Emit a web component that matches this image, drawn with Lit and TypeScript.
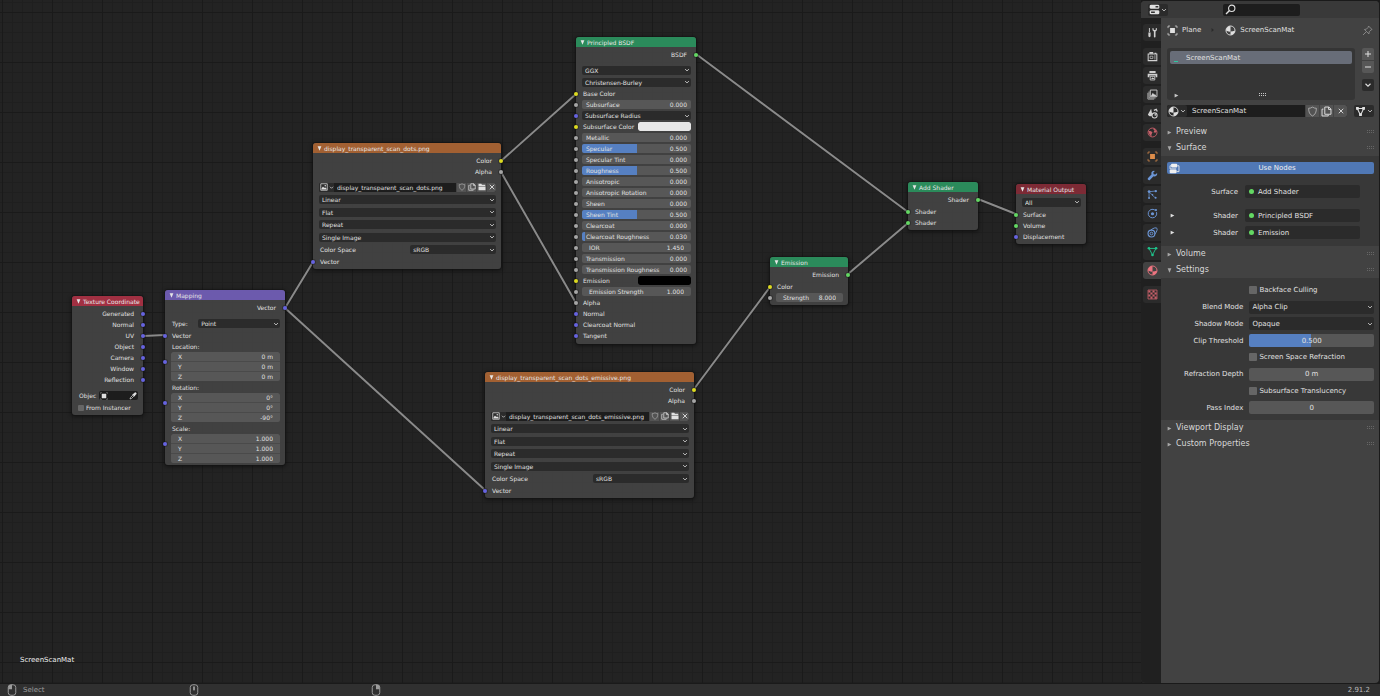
import { LitElement, html, svg, css, nothing, TemplateResult } from "lit";
import { customElement, property } from "lit/decorators.js";
import { classMap } from "lit/directives/class-map.js";
import { styleMap } from "lit/directives/style-map.js";

/* ---------- icons, all on a 16 x 16 grid ---------- */

const icons: Record<string, TemplateResult> = {
  chevron: svg`<path d="M3 5.5 8 10.5 13 5.5" fill="none" stroke="currentColor" stroke-width="2.2"/>`,
  right: svg`<path d="M2 2v12l12-6z" fill="currentColor"/>`,
  down: svg`<path d="M2 1h12L8 15z" fill="currentColor"/>`,
  crumb: svg`<path d="M5 4l5 4-5 4z" fill="currentColor"/>`,
  plus: svg`<path d="M8 2v12M2 8h12" stroke="currentColor" stroke-width="2"/>`,
  minus: svg`<path d="M2 8h12" stroke="currentColor" stroke-width="2"/>`,
  close: svg`<path d="M3.5 3.5l9 9M12.5 3.5l-9 9" stroke="currentColor" stroke-width="1.8"/>`,
  grip: svg`<path d="M0 4h2v2H0zM4 4h2v2H4zM8 4h2v2H8zM12 4h2v2h-2zM0 8h2v2H0zM4 8h2v2H4zM8 8h2v2H8zM12 8h2v2h-2z" fill="currentColor" shape-rendering="crispEdges"/>`,
  shield: svg`<path d="M8 1.6c1.800 1.200 3.600 1.700 5.600 1.700 0 5.400-1.300 9-5.600 11.200C3.700 12.300 2.400 8.700 2.400 3.300c2 0 3.800-.5 5.600-1.700z" fill="none" stroke="currentColor" stroke-width="1.200" opacity=".7"/>`,
  copy: svg`<path d="M5.500 1.500h6l3 3V12h-9zM11 1.500V5h3.500" fill="none" stroke="currentColor" stroke-width="1.400"/><path d="M3.500 4.500h-2v10h9v-1.500" fill="none" stroke="currentColor" stroke-width="1.400"/>`,
  folder: svg`<path d="M1 1.500h5.500L8 3.500h6.500V6H1zM1 7h14v7.500H1z" fill="currentColor"/>`,
  image: svg`<path d="M1.500 1.500h13v13h-13z" fill="none" stroke="currentColor" stroke-width="1.500"/><path d="M3 13V11l3-4 2.500 3 1.500-1.500L13 11v2z" fill="currentColor"/><circle cx="10.500" cy="5.500" r="1.500" fill="currentColor"/>`,
  object: svg`<path d="M4.500 4.500h7v7h-7z" fill="currentColor"/><path d="M1.500 4.500v-3h3M11.500 1.500h3v3M14.500 11.500v3h-3M4.500 14.500h-3v-3" fill="none" stroke="currentColor" stroke-width="1.300" opacity=".8"/>`,
  well: svg`<path d="M3.500 3.500h9v9h-9z" fill="currentColor"/><path d="M1 4V1h3M12 1h3v3M15 12v3h-3M4 15H1v-3" fill="none" stroke="currentColor" stroke-width="1" opacity=".5"/>`,
  dropper: svg`<path d="M2 14l1-3 5.500-5.500 2 2L5 13z" fill="none" stroke="currentColor" stroke-width="1.400"/><path d="M7.500 4l1.500-.5 2-2a2 2 0 0 1 3.500 3l-2 2-.5 1.500-1 1L6.800 5z" fill="currentColor"/>`,
  editor: svg`<rect x="1" y="1" width="14" height="6" rx="2" fill="currentColor"/><rect x="1" y="9" width="14" height="6" rx="2" fill="currentColor"/><path d="M9.500 2.800h4v2.400h-4zM3 10.800h5.500v2.400H3z" fill="#333"/>`,
  search: svg`<circle cx="9.800" cy="6.200" r="4.600" fill="none" stroke="currentColor" stroke-width="1.600"/><path d="M6.500 9.500 1.500 14.500" stroke="currentColor" stroke-width="2"/>`,
  pin: svg`<path d="M9.500 1.500l5 5-1.500.8-2.500 2.500-.5 3.200L3.500 6.500l3-.5L9 3.300zM6.300 9.700 1.500 14.500" fill="none" stroke="currentColor" stroke-width="1.300"/>`,
  material: svg`<circle cx="8" cy="8" r="6.600" fill="none" stroke="currentColor" stroke-width="1.300"/><path d="M8 1.400A6.600 6.600 0 0 0 1.400 8c2.100 1.400 4.300 1.900 6.600 1.600zM8 9.600c2.400-.2 4.600-.8 6.600-1.600A6.600 6.600 0 0 1 8 14.600z" fill="currentColor"/>`,
  filter: svg`<path d="M3.500 4 7.500 12.500M12.500 4 8.500 12.500M4 3.500h8" stroke="currentColor" stroke-width="1.500"/><path d="M1.500 1.500h4v4h-4zM10.500 1.500h4v4h-4zM6 10.500h4v4H6z" fill="currentColor"/>`,
  tool: svg`<path d="M3.500 1.500v6" stroke="currentColor" stroke-width="1.400"/><path d="M2 8h3.200v5.200a1.600 1.600 0 0 1-3.200 0z" fill="currentColor"/><path d="M8 1.500v3.200l2 2V14a1 1 0 0 0 2.400 0V6.700l2-2V1.500l-1.800.6v2.400h-2.800V2.100z" fill="currentColor"/>`,
  render: svg`<path d="M1.700 4.500h12.600v9.500H1.700z" fill="none" stroke="currentColor" stroke-width="1.500"/><path d="M3.500 1.500h5.500v2.500H3.500zM11 2.500h2.500v2H11z" fill="currentColor"/><path d="M11.500 6v6.500" stroke="currentColor" stroke-width="1"/><path d="M4.500 7.500h4v3.500h-4z" fill="none" stroke="currentColor" stroke-width="1"/>`,
  output: svg`<path d="M3.500 1.500h9v3h-9zM1 5.500h14v5h-2.500V8h-9v2.500H1z" fill="currentColor"/><path d="M4.700 9.200h6.600v5.300H4.700z" fill="none" stroke="currentColor" stroke-width="1.300"/><path d="M6 13l1.700-2.500L9 12l.7-.8.900 1.800z" fill="currentColor"/>`,
  layers: svg`<path d="M4.800 1.500h9.700v9.700H4.800z" fill="none" stroke="currentColor" stroke-width="1.300"/><path d="M3 3.500v9.500h9.500M1.300 5.500v9.200h9.200" fill="none" stroke="currentColor" stroke-width="1.100"/><path d="M5.500 10.500l3-5 2 2.800 1-1 2.200 3.200z" fill="currentColor"/>`,
  scene: svg`<path d="M6 1 1.300 9.500c1.200 3 5 3.500 6.500 1L6 1z" fill="currentColor"/><circle cx="11" cy="10.800" r="3.700" fill="#2b2b2b" stroke="currentColor" stroke-width="1.500"/><circle cx="12" cy="10" r="1.200" fill="currentColor"/><path d="M10 3.500l3.500-1.500 1.500 3" stroke="currentColor" stroke-width="1.800" fill="none"/>`,
  world: svg`<circle cx="8" cy="8" r="6.500" fill="none" stroke="currentColor" stroke-width="1.300"/><path d="M2 5.500l4 .5 2 2-1.500 2.500V14L3.500 11zM8 2l3.500.8 2.700 4L12 8.500l-2.500-1L11 5z" fill="currentColor"/>`,
  wrench: svg`<path d="M14.700 4.300l-2.500 2.200-2.500-.5-.6-2.300 2.400-2.400a4 4 0 0 0-5 5.200L1.500 11.500a1.900 1.900 0 0 0 3 2.700l5-5a4 4 0 0 0 5.200-4.900z" fill="currentColor"/>`,
  particles: svg`<path d="M3 4l9-1M3 4v8.500M3.500 4.500l8 8" stroke="currentColor" stroke-width="1.100"/><circle cx="3" cy="3.800" r="2" fill="currentColor"/><circle cx="12.800" cy="3" r="1.700" fill="currentColor"/><circle cx="3" cy="13" r="1.500" fill="currentColor"/><circle cx="12.500" cy="12.800" r="1.500" fill="currentColor"/><circle cx="8" cy="8.500" r="1.200" fill="currentColor"/>`,
  physics: svg`<path d="M11.500 3a6.200 6.200 0 1 0 2.300 3" fill="none" stroke="currentColor" stroke-width="1.400"/><circle cx="8" cy="8.300" r="2.300" fill="currentColor"/><circle cx="13" cy="3" r="1.600" fill="currentColor"/>`,
  constraint: svg`<circle cx="6.500" cy="9.500" r="5" fill="none" stroke="currentColor" stroke-width="1.600"/><circle cx="6.500" cy="9.500" r="2" fill="none" stroke="currentColor" stroke-width="1.400"/><path d="M5.500 4.500c4-3.500 8-4 9-2.500s-.5 5-3.500 9" fill="none" stroke="currentColor" stroke-width="1.400"/>`,
  mesh: svg`<path d="M3 3.500h10L8 13z" fill="none" stroke="currentColor" stroke-width="1.400"/><circle cx="2.800" cy="3.300" r="1.900" fill="currentColor"/><circle cx="13.200" cy="3.300" r="1.900" fill="currentColor"/><circle cx="8" cy="13" r="1.900" fill="currentColor"/>`,
  texture: svg`<path d="M1.500 1.500h13v13h-13z" fill="none" stroke="currentColor" stroke-width="1.200"/><path d="M2 2h3v3H2zM8 2h3v3H8zM5 5h3v3H5zM11 5h3v3h-3zM2 8h3v3H2zM8 8h3v3H8zM5 11h3v3H5zM11 11h3v3h-3z" fill="currentColor"/>`,
  nodes: svg`<rect x="3" y="1" width="9" height="5.500" rx="1.500" fill="currentColor"/><rect x="1" y="9.500" width="10" height="5.500" rx="1.500" fill="currentColor"/><path d="M12 4h2.500v8.500H11M3 4H1.500v4.500h9" fill="none" stroke="currentColor" stroke-width="1.200"/>`,
  mouseLeft: svg`<rect x="3" y="1" width="10" height="14" rx="3.500" fill="none" stroke="currentColor" stroke-width="1.300"/><path d="M3 7V4.500A3.500 3.500 0 0 1 6.500 1H8v6z" fill="currentColor"/>`,
  mouseMiddle: svg`<rect x="3" y="1" width="10" height="14" rx="3.500" fill="none" stroke="currentColor" stroke-width="1.300"/><rect x="6.800" y="3" width="2.400" height="5.500" rx="1" fill="currentColor"/>`,
  mouseRight: svg`<rect x="3" y="1" width="10" height="14" rx="3.500" fill="none" stroke="currentColor" stroke-width="1.300"/><path d="M13 7V4.500A3.500 3.500 0 0 0 9.500 1H8v6z" fill="currentColor"/>`,
};

const icon = (name: string, size = "") =>
  html`<svg class="icon ${size}" viewBox="0 0 16 16" aria-hidden="true">${icons[name]}</svg>`;

/* ---------- shared controls ---------- */

const controls = css`
  * { box-sizing: border-box; }
  button, input, select {
    font: inherit; color: inherit; margin: 0; padding: 0; border: 0;
    background: none; border-radius: 0; outline: none; appearance: none; min-width: 0;
  }
  .icon { display: block; flex: none; width: 11px; height: 11px; }
  .icon.xs { width: 5px; height: 5px; }
  .icon.sm { width: 6px; height: 6px; }
  .icon.md { width: 8px; height: 8px; }
  .icon.lg { width: 12px; height: 12px; }
  .stack { display: grid; align-items: center; min-width: 0; }
  .stack > * { grid-area: 1 / 1; }
  .stack > .icon { justify-self: end; pointer-events: none; margin-right: 1px; }
  .stack > .caption {
    display: flex; justify-content: space-between; pointer-events: none; padding: 0 4px;
  }
  .drop { width: 100%; height: var(--control); background: #2b2b2b; border-radius: 2px; padding: 0 3px; }
  .range {
    width: 100%; height: var(--control); border-radius: 2px;
    background: linear-gradient(to right, #5680c2 var(--fill), #575757 var(--fill));
  }
  .range::-webkit-slider-thumb { appearance: none; width: 0; height: 0; }
  .tick { width: var(--tick); height: var(--tick); background: #666; border-radius: 1px; flex: none; }
  .tick:checked { background: #5680c2; }
  .check { display: flex; align-items: center; gap: 2px; }
`;

const dropDown = (name: string, value: string) => html`
  <span class="stack">
    <select class="drop" aria-label=${name}><option>${value}</option></select>
    ${icon("chevron", "sm")}
  </span>`;

/* ---------- node editor ---------- */

type Kind = "color" | "float" | "vector" | "shader";

interface Row {
  type: "out" | "in" | "slider" | "number" | "drop" | "pair" | "swatch" | "triple" | "image" | "object" | "check" | "gap" | "space" | "tall";
  label?: string;
  value?: string;
  values?: string[];
  fill?: number;
  socket?: Kind;
  split?: "even" | "wide";
  rows?: Row[];
}

interface GraphNode {
  title: string;
  tone: "green" | "red" | "maroon" | "purple" | "orange";
  x: number;
  y: number;
  width: number;
  rows: Row[];
}

const out = (label: string, socket: Kind): Row => ({ type: "out", label, socket });
const inp = (label: string, socket: Kind): Row => ({ type: "in", label, socket });
const slide = (label: string, fill: number): Row =>
  ({ type: "slider", label, fill, value: fill.toFixed(3), socket: "float" });
const num = (label: string, value: string): Row => ({ type: "number", label, value, socket: "float" });
const drop = (value: string): Row => ({ type: "drop", label: value, value });
const gap: Row = { type: "gap" };
const space: Row = { type: "space" };

const imageNode = (title: string, x: number, y: number, width: number): GraphNode => ({
  title, x, y, width, tone: "orange",
  rows: [
    out("Color", "color"), out("Alpha", "float"), gap,
    {
      type: "tall",
      rows: [
        { type: "image", value: title },
        drop("Linear"), drop("Flat"), drop("Repeat"), drop("Single Image"),
        { type: "pair", label: "Color Space", value: "sRGB", split: "even" },
      ],
    },
    inp("Vector", "vector"),
  ],
});

const nodes: GraphNode[] = [
  {
    title: "Texture Coordinate", tone: "red", x: 72, y: 296, width: 71,
    rows: [
      out("Generated", "vector"), out("Normal", "vector"), out("UV", "vector"), out("Object", "vector"),
      out("Camera", "vector"), out("Window", "vector"), out("Reflection", "vector"), gap,
      { type: "object", label: "Objec" }, { type: "check", label: "From Instancer" },
    ],
  },
  {
    title: "Mapping", tone: "purple", x: 165, y: 290, width: 120,
    rows: [
      out("Vector", "vector"), gap,
      { type: "pair", label: "Type:", value: "Point", split: "wide" },
      inp("Vector", "vector"),
      { type: "triple", label: "Location:", values: ["0 m", "0 m", "0 m"], socket: "vector" },
      { type: "triple", label: "Rotation:", values: ["0°", "0°", "-90°"], socket: "vector" },
      { type: "triple", label: "Scale:", values: ["1.000", "1.000", "1.000"], socket: "vector" },
    ],
  },
  imageNode("display_transparent_scan_dots.png", 313, 143, 188),
  imageNode("display_transparent_scan_dots_emissive.png", 485, 372, 209),
  {
    title: "Principled BSDF", tone: "green", x: 576, y: 37, width: 120,
    rows: [
      out("BSDF", "shader"), gap,
      drop("GGX"), drop("Christensen-Burley"),
      inp("Base Color", "color"),
      slide("Subsurface", 0),
      { type: "drop", label: "Subsurface Radius", value: "Subsurface Radius", socket: "vector" },
      { type: "swatch", label: "Subsurface Color", value: "#e7e7e7", socket: "color" },
      slide("Metallic", 0), slide("Specular", 0.5), slide("Specular Tint", 0), slide("Roughness", 0.5),
      slide("Anisotropic", 0), slide("Anisotropic Rotation", 0), slide("Sheen", 0), slide("Sheen Tint", 0.5),
      slide("Clearcoat", 0), slide("Clearcoat Roughness", 0.03),
      num("IOR", "1.450"),
      slide("Transmission", 0), slide("Transmission Roughness", 0),
      { type: "swatch", label: "Emission", value: "#000000", socket: "color" },
      num("Emission Strength", "1.000"),
      inp("Alpha", "float"), inp("Normal", "vector"), inp("Clearcoat Normal", "vector"), inp("Tangent", "vector"),
      space,
    ],
  },
  {
    title: "Emission", tone: "green", x: 770, y: 257, width: 78,
    rows: [out("Emission", "shader"), space, inp("Color", "color"), num("Strength", "8.000")],
  },
  {
    title: "Add Shader", tone: "green", x: 908, y: 182, width: 70,
    rows: [out("Shader", "shader"), space, inp("Shader", "shader"), inp("Shader", "shader")],
  },
  {
    title: "Material Output", tone: "maroon", x: 1016, y: 184, width: 70,
    rows: [drop("All"), space, inp("Surface", "shader"), inp("Volume", "shader"), inp("Displacement", "vector")],
  },
];

const links: [number, number, number, number][] = [
  [143, 336, 165, 335],
  [285, 308, 313, 262],
  [285, 308, 485, 490],
  [501, 161, 576, 94],
  [501, 172, 576, 303],
  [696, 54, 908, 212],
  [694, 389, 770, 287],
  [848, 274, 908, 223],
  [978, 199, 1016, 214],
];

@customElement("node-canvas")
class NodeCanvas extends LitElement {
  @property() name = "";

  static styles = [controls, css`
    :host {
      --control: 9px; --tick: 6px;
      display: block; position: relative; overflow: hidden;
      background-color: #232323;
      background-image:
        linear-gradient(to right, #1a1a1a 1px, transparent 1px),
        linear-gradient(to bottom, #1a1a1a 1px, transparent 1px),
        linear-gradient(to right, #1f1f1f 1px, transparent 1px),
        linear-gradient(to bottom, #1f1f1f 1px, transparent 1px);
      background-size: 50px 50px, 50px 50px, 10px 10px, 10px 10px;
      background-position: 2px 12px, 2px 12px, 2px 2px, 2px 2px;
    }
    .links { position: absolute; inset: 0; width: 100%; height: 100%; }
    .links .edge { stroke: #1c1c1c; stroke-width: 3px; }
    .links .wire { stroke: #8a8a8a; stroke-width: 2px; }
    .material { position: absolute; left: 20px; bottom: 17px; font-size: 7px; line-height: 12px; color: #eee; }
    .node {
      position: absolute; padding-bottom: 2px; border-radius: 3px;
      background: rgba(67, 67, 67, 0.94); box-shadow: 0 0 0 1px rgba(20, 20, 20, 0.5), 0 1px 4px 1px rgba(0, 0, 0, 0.45);
      font-size: 6px; line-height: 9px; color: #e0e0e0; white-space: nowrap;
    }
    .node.tight { padding-bottom: 1px; }
    .head {
      display: flex; align-items: center; gap: 2px; height: 10px; padding: 0 4px; margin: 0 0 2px;
      font: inherit; border-radius: 3px 3px 0 0; color: #e6e6e6;
    }
    .green { background: #2b8b5b; }
    .red { background: #a13042; }
    .maroon { background: #7d2a35; }
    .purple { background: #6c5aad; }
    .orange { background: #a26032; }
    .gap { height: 4px; }
    .space { height: 1px; }
    .row { position: relative; height: 11px; display: grid; align-items: center; padding: 0 5px 0 6px; }
    .row.free { height: 13px; }
    .row.choice { height: 12px; }
    .tall { display: grid; grid-auto-rows: 1fr; height: 75px; }
    .tall .row { height: auto; }
    .row.out { justify-content: end; padding-right: 9px; }
    .row.in { padding-left: 7px; }
    .row.even { grid-template-columns: 52fr 49fr; }
    .row.wide { grid-template-columns: 25fr 75fr; }
    .row .name { padding-left: 1px; }
    .socket {
      position: absolute; left: -2px; top: calc(50% - 2px); width: 4px; height: 4px; border-radius: 50%;
      box-shadow: 0 0 0 1px rgba(20, 20, 20, 0.35);
    }
    .out > .socket { left: auto; right: -2px; }
    .socket.color { background: #dcda20; }
    .socket.float { background: #a6a6a6; }
    .socket.vector { background: #6663e0; }
    .socket.shader { background: #63d863; }
    .number {
      display: flex; align-items: center; height: 9px; padding: 0 7px; background: #575757; border-radius: 2px;
    }
    .number input { flex: 1; width: 0; text-align: right; }
    .triple { position: relative; padding: 0 5px 0 6px; }
    .triple .name { height: 11px; line-height: 11px; padding-left: 1px; }
    .triple .fields { border-radius: 2px; overflow: hidden; height: 30px; padding-bottom: 1px; }
    .triple .number { height: 10px; border-radius: 0; border-bottom: 1px solid #4a4a4a; }
    .triple .number:first-child { border-radius: 2px 2px 0 0; }
    .triple .number:last-child { border-radius: 0 0 2px 2px; border-bottom: 0; height: 9px; }
    .swatch { width: 100%; height: 9px; border-radius: 2px; overflow: hidden; }
    .swatch::-webkit-color-swatch-wrapper { padding: 0; }
    .swatch::-webkit-color-swatch { border: 0; border-radius: 2px; }
    .data { display: flex; height: 9px; border-radius: 2px; overflow: hidden; background: #1d1d1d; }
    .data .pick { display: flex; align-items: center; gap: 1px; width: 15px; background: #2b2b2b; padding-left: 1px; }
    .data input { flex: 1; width: 0; padding: 0 3px; }
    .data .act { width: 10px; display: grid; place-items: center; background: #535353; border-left: 1px solid #444; }
    .row.object { grid-template-columns: auto 1fr; gap: 3px; padding-left: 7px; }
    .object .well {
      display: flex; align-items: center; justify-content: space-between; height: 9px;
      padding: 0 1px; background: #1d1d1d; border-radius: 2px;
    }
    .row.check { display: flex; }
  `];

  private socket(kind?: Kind) {
    return kind ? html`<i class="socket ${kind}"></i>` : nothing;
  }

  private number(label: string, value: string) {
    return html`<label class="number"><span>${label}</span><input type="text" .value=${value} /></label>`;
  }

  private row(r: Row): TemplateResult {
    switch (r.type) {
      case "gap":
      case "space":
        return html`<div class=${r.type}></div>`;
      case "tall":
        return html`<div class="tall">${r.rows!.map((x) => this.row(x))}</div>`;
      case "out":
      case "in":
        return html`<div class="row ${r.type}"><span>${r.label}</span>${this.socket(r.socket)}</div>`;
      case "slider":
        return html`<div class="row">${this.socket(r.socket)}
          <label class="stack">
            <input class="range" type="range" min="0" max="1" step="0.001" .value=${String(r.fill)}
              style=${styleMap({ "--fill": `${r.fill! * 100}%` })} />
            <span class="caption"><span>${r.label}</span><span>${r.value}</span></span>
          </label></div>`;
      case "number":
        return html`<div class="row">${this.socket(r.socket)}${this.number(r.label!, r.value!)}</div>`;
      case "drop":
        return html`<div class=${classMap({ row: true, choice: !r.socket })}>
          ${this.socket(r.socket)}${dropDown(r.label!, r.value!)}</div>`;
      case "pair":
        return html`<div class="row free ${r.split}"><span class="name">${r.label}</span>${dropDown(r.label!, r.value!)}</div>`;
      case "swatch":
        return html`<label class="row even">${this.socket(r.socket)}
          <span class="name">${r.label}</span><input class="swatch" type="color" .value=${r.value!} /></label>`;
      case "triple":
        return html`<div class="triple">${this.socket(r.socket)}
          <div class="name">${r.label}</div>
          <div class="fields">${r.values!.map((v, i) => this.number("XYZ"[i], v))}</div></div>`;
      case "image":
        return html`<div class="row"><div class="data">
          <button class="pick" aria-label="Browse image">${icon("image", "md")}${icon("chevron", "xs")}</button>
          <input type="text" aria-label="Image name" .value=${r.value!} />
          <button class="act" aria-label="Fake user">${icon("shield", "md")}</button>
          <button class="act" aria-label="New image">${icon("copy", "md")}</button>
          <button class="act" aria-label="Open image">${icon("folder", "md")}</button>
          <button class="act" aria-label="Unlink">${icon("close", "md")}</button>
        </div></div>`;
      case "object":
        return html`<div class="row free object"><span>${r.label}</span>
          <button class="well" aria-label="Object">${icon("well", "md")}${icon("dropper", "md")}</button></div>`;
      case "check":
        return html`<label class="row check"><input class="tick" type="checkbox" /><span>${r.label}</span></label>`;
    }
  }

  render() {
    return html`
      <svg class="links">
        ${links.map(([a, b, c, d]) => svg`
          <line class="edge" x1=${a} y1=${b} x2=${c} y2=${d} />
          <line class="wire" x1=${a} y1=${b} x2=${c} y2=${d} />`)}
      </svg>
      ${nodes.map((n) => html`
        <section class=${classMap({ node: true, tight: n.tone === "purple" })}
          style=${styleMap({ left: `${n.x}px`, top: `${n.y}px`, width: `${n.width}px` })}>
          <h2 class="head ${n.tone}">${icon("down", "xs")}<span>${n.title}</span></h2>
          ${n.rows.map((r) => this.row(r))}
        </section>`)}
      <div class="material">${this.name}</div>`;
  }
}

/* ---------- properties editor ---------- */

const tabGroups: [string, string, string][][] = [
  [["tool", "Tool", "plain"]],
  [["render", "Render", "plain"], ["output", "Output", "plain"], ["layers", "View Layer", "plain"],
   ["scene", "Scene", "plain"], ["world", "World", "rose"]],
  [["object", "Object", "amber"], ["wrench", "Modifiers", "blue"], ["particles", "Particles", "blue"],
   ["physics", "Physics", "blue"], ["constraint", "Constraints", "blue"], ["mesh", "Object Data", "teal"],
   ["material", "Material", "pink"]],
  [["texture", "Texture", "rose"]],
];

@customElement("properties-editor")
class PropertiesEditor extends LitElement {
  @property() name = "";

  static styles = [controls, css`
    :host {
      --control: 13px; --tick: 8px;
      display: grid; grid-template: 17px 1fr / 20px 1fr; min-height: 0;
      margin: 1px 1px 1px 0; border-radius: 4px; overflow: hidden;
      font-size: 7px; line-height: 12px; color: #e0e0e0; background: #424242; white-space: nowrap;
    }
    .bar { grid-column: 1 / -1; display: grid; grid-template-columns: 1fr 77px 1fr; align-items: center; background: #393939; padding: 0 4px 0 7px; }
    .bar .kind { display: flex; align-items: center; justify-content: center; gap: 1px; width: 20px; height: 12px; background: #2b2b2b; border-radius: 2px; }
    .find { display: flex; align-items: center; height: 12px; padding: 0 2px; background: #1d1d1d; border-radius: 2px; }
    .find input { flex: 1; width: 0; }
    .tabs { display: flex; flex-direction: column; gap: 7px; background: #202020; padding: 6px 0 0 2px; }
    .group { display: flex; flex-direction: column; gap: 2px; }
    .tab { display: grid; place-items: center; height: 17px; background: #2b2b2b; border-radius: 3px 0 0 3px; }
    .tab.on { background: #424242; }
    .plain { color: #d0d0d0; }
    .rose { color: #c9606a; }
    .pink { color: #ee7480; }
    .amber { color: #dd8d4a; }
    .blue { color: #6c96d6; }
    .teal { color: #1fc28a; }
    .crumbs { display: flex; align-items: center; gap: 4px; height: 24px; padding: 0 6px; }
    .crumbs a { display: flex; align-items: center; gap: 4px; color: inherit; text-decoration: none; }
    .crumbs .sep { color: #2c2c2c; margin: 0 4px; }
    .crumbs .pin { margin-left: auto; color: #8f8f8f; }
    .slots { display: grid; grid-template-columns: 1fr 12px; gap: 7px; padding: 6px 5px 5px 6px; }
    .list { display: flex; flex-direction: column; justify-content: space-between; height: 52px; padding: 3px; background: #353535; border-radius: 3px; }
    .slot { display: flex; align-items: center; gap: 8px; height: 13px; padding-left: 4px; text-align: left; background: #686d78; border-radius: 2px; }
    .slot .mark { width: 4px; height: 1px; margin-top: 7px; background: #2fc7a0; }
    .foot { display: grid; grid-template-columns: 1fr 8px 1fr; align-items: center; padding: 0 0 0 4px; height: 6px; color: #c8c8c8; }
    .side { display: flex; flex-direction: column; gap: 1px; }
    .side .btn { display: grid; place-items: center; height: 12px; background: #575757; }
    .side .btn:first-child { border-radius: 2px 2px 0 0; }
    .side .btn:nth-child(2) { border-radius: 0 0 2px 2px; }
    .side .btn:last-child { margin-top: 5px; background: #2b2b2b; border-radius: 2px; }
    .data { display: flex; gap: 7px; padding: 0 5px 7px 6px; }
    .data .id { flex: 1; display: flex; height: 12px; background: #1d1d1d; border-radius: 2px; overflow: hidden; }
    .data .id input { flex: 1; width: 0; padding: 0 5px; }
    .pick { display: flex; align-items: center; justify-content: center; gap: 1px; width: 20px; height: 12px; background: #2b2b2b; border-radius: 2px; }
    .act { width: 14px; display: grid; place-items: center; background: #535353; border-left: 1px solid #444; color: #e0e0e0; }
    .title { display: flex; align-items: center; height: 16px; margin: 0; padding: 0 4px 0 6px; font: inherit; font-size: 8px; color: #d8d8d8; }
    .title .toggle { display: flex; align-items: center; gap: 4px; }
    .title .toggle .icon { color: #a8a8a8; }
    .title > .icon { margin-left: auto; color: #666; }
    .body { background: #383838; padding: 6px 5px 5px 6px; }
    .use { width: 100%; display: grid; grid-template-columns: 11px 1fr; align-items: center; height: 12px; padding: 0 0 0 2px; background: #5078b5; border-radius: 2px; color: #f0f0f0; }
    .tree { display: grid; grid-template-columns: 71fr 115fr 7px; column-gap: 7px; align-items: center; grid-auto-rows: 17px; padding-top: 9px; }
    .tree.sub { padding-top: 7px; }
    .tree .key { display: flex; align-items: center; justify-content: flex-end; grid-column: 1; }
    .tree .key .icon { margin: 0 auto 0 3px; }
    .tree .link { display: flex; align-items: center; gap: 4px; height: 13px; padding: 0 4px; text-align: left; background: #2b2b2b; border-radius: 2px; }
    .tree .link i { width: 5px; height: 5px; border-radius: 50%; background: #63d863; }
    .settings { display: grid; grid-auto-rows: 1fr; height: 142px; padding: 4px 5px 4px 6px; background: #383838; }
    .prop { display: grid; grid-template-columns: 38fr 62fr; column-gap: 6px; align-items: center; }
    .prop .key { text-align: right; }
    .prop .check { grid-column: 2; }
    .prop .caption { justify-content: center; }
    .prop .value { width: 100%; height: 13px; text-align: center; background: #575757; border-radius: 2px; }
  `];

  private title(text: string, open = false) {
    return html`<h3 class="title"><button class="toggle" aria-expanded=${open}>
      ${icon(open ? "down" : "right", "xs")}<span>${text}</span></button>${icon("grip", "md")}</h3>`;
  }

  private choice(label: string, value: string) {
    return html`<div class="prop"><span class="key">${label}</span>${dropDown(label, value)}</div>`;
  }

  private check(label: string) {
    return html`<div class="prop"><label class="check"><input class="tick" type="checkbox" /><span>${label}</span></label></div>`;
  }

  private value(label: string, value: string) {
    return html`<label class="prop"><span class="key">${label}</span><input class="value" type="text" .value=${value} /></label>`;
  }

  private shader(label: string, value: string, arrow = true) {
    return html`<span class="key">${arrow ? icon("right", "xs") : nothing}${label}</span>
      <button class="link"><i></i>${value}</button>`;
  }

  render() {
    return html`
      <header class="bar">
        <button class="kind" aria-label="Editor type">${icon("editor")}${icon("chevron", "sm")}</button>
        <label class="find">${icon("search")}<input type="search" aria-label="Search" /></label>
      </header>
      <nav class="tabs">
        ${tabGroups.map((g) => html`<div class="group">
          ${g.map(([id, label, tone]) => html`
            <button class="tab ${tone} ${id === "material" ? "on" : ""}" aria-label=${label}>${icon(id)}</button>`)}
        </div>`)}
      </nav>
      <main>
        <div class="crumbs">
          <a href="#object">${icon("object")}<span>Plane</span></a>
          <span class="sep">${icon("crumb", "md")}</span>
          <a href="#material">${icon("material")}<span>${this.name}</span></a>
          <button class="pin" aria-label="Pin">${icon("pin")}</button>
        </div>
        <div class="slots">
          <div class="list">
            <button class="slot"><i class="mark"></i><span>${this.name}</span></button>
            <div class="foot">${icon("right", "xs")}${icon("grip", "md")}</div>
          </div>
          <div class="side">
            <button class="btn" aria-label="Add slot">${icon("plus", "md")}</button>
            <button class="btn" aria-label="Remove slot">${icon("minus", "md")}</button>
            <button class="btn" aria-label="Slot menu">${icon("chevron", "md")}</button>
          </div>
        </div>
        <div class="data">
          <div class="id">
            <button class="pick" aria-label="Browse material">${icon("material")}${icon("chevron", "sm")}</button>
            <input type="text" aria-label="Material name" .value=${this.name} />
            <button class="act" aria-label="Fake user">${icon("shield")}</button>
            <button class="act" aria-label="New material">${icon("copy")}</button>
            <button class="act" aria-label="Unlink">${icon("close", "md")}</button>
          </div>
          <button class="pick" aria-label="Link">${icon("filter")}${icon("chevron", "sm")}</button>
        </div>
        ${this.title("Preview")}
        ${this.title("Surface", true)}
        <div class="body">
          <button class="use">${icon("nodes")}<span>Use Nodes</span></button>
          <div class="tree">${this.shader("Surface", "Add Shader", false)}</div>
          <div class="tree sub">${this.shader("Shader", "Principled BSDF")}${this.shader("Shader", "Emission")}</div>
        </div>
        ${this.title("Volume")}
        ${this.title("Settings", true)}
        <div class="settings">
          ${this.check("Backface Culling")}
          ${this.choice("Blend Mode", "Alpha Clip")}
          ${this.choice("Shadow Mode", "Opaque")}
          <label class="prop"><span class="key">Clip Threshold</span>
            <span class="stack">
              <input class="range" type="range" min="0" max="1" step="0.001" value="0.5" style=${styleMap({ "--fill": "50%" })} />
              <span class="caption">0.500</span>
            </span></label>
          ${this.check("Screen Space Refraction")}
          ${this.value("Refraction Depth", "0 m")}
          ${this.check("Subsurface Translucency")}
          ${this.value("Pass Index", "0")}
        </div>
        ${this.title("Viewport Display")}
        ${this.title("Custom Properties")}
      </main>`;
  }
}

/* ---------- window ---------- */

@customElement("app-root")
class AppRoot extends LitElement {
  static styles = [controls, css`
    :host {
      display: grid; grid-template: 1fr 12px / 1fr 239px; height: 100vh; overflow: hidden;
      background: #1a1a1a; font-family: "DejaVu Sans", sans-serif;
    }
    node-canvas { min-width: 0; margin-bottom: 1px; }
    .status {
      grid-column: 1 / -1; display: grid; grid-template-columns: 182px 182px 1fr auto; align-items: center;
      padding: 0 10px 0 6px; background: #303030; font-size: 7px; line-height: 12px; color: #9c9c9c;
    }
    .hint { display: flex; align-items: center; gap: 5px; }
    .version { color: #bbb; }
  `];

  render() {
    return html`
      <node-canvas name="ScreenScanMat"></node-canvas>
      <properties-editor name="ScreenScanMat"></properties-editor>
      <footer class="status">
        <span class="hint">${icon("mouseLeft", "lg")}Select</span>
        <span class="hint">${icon("mouseMiddle", "lg")}</span>
        <span class="hint">${icon("mouseRight", "lg")}</span>
        <span class="version">2.91.2</span>
      </footer>`;
  }
}
